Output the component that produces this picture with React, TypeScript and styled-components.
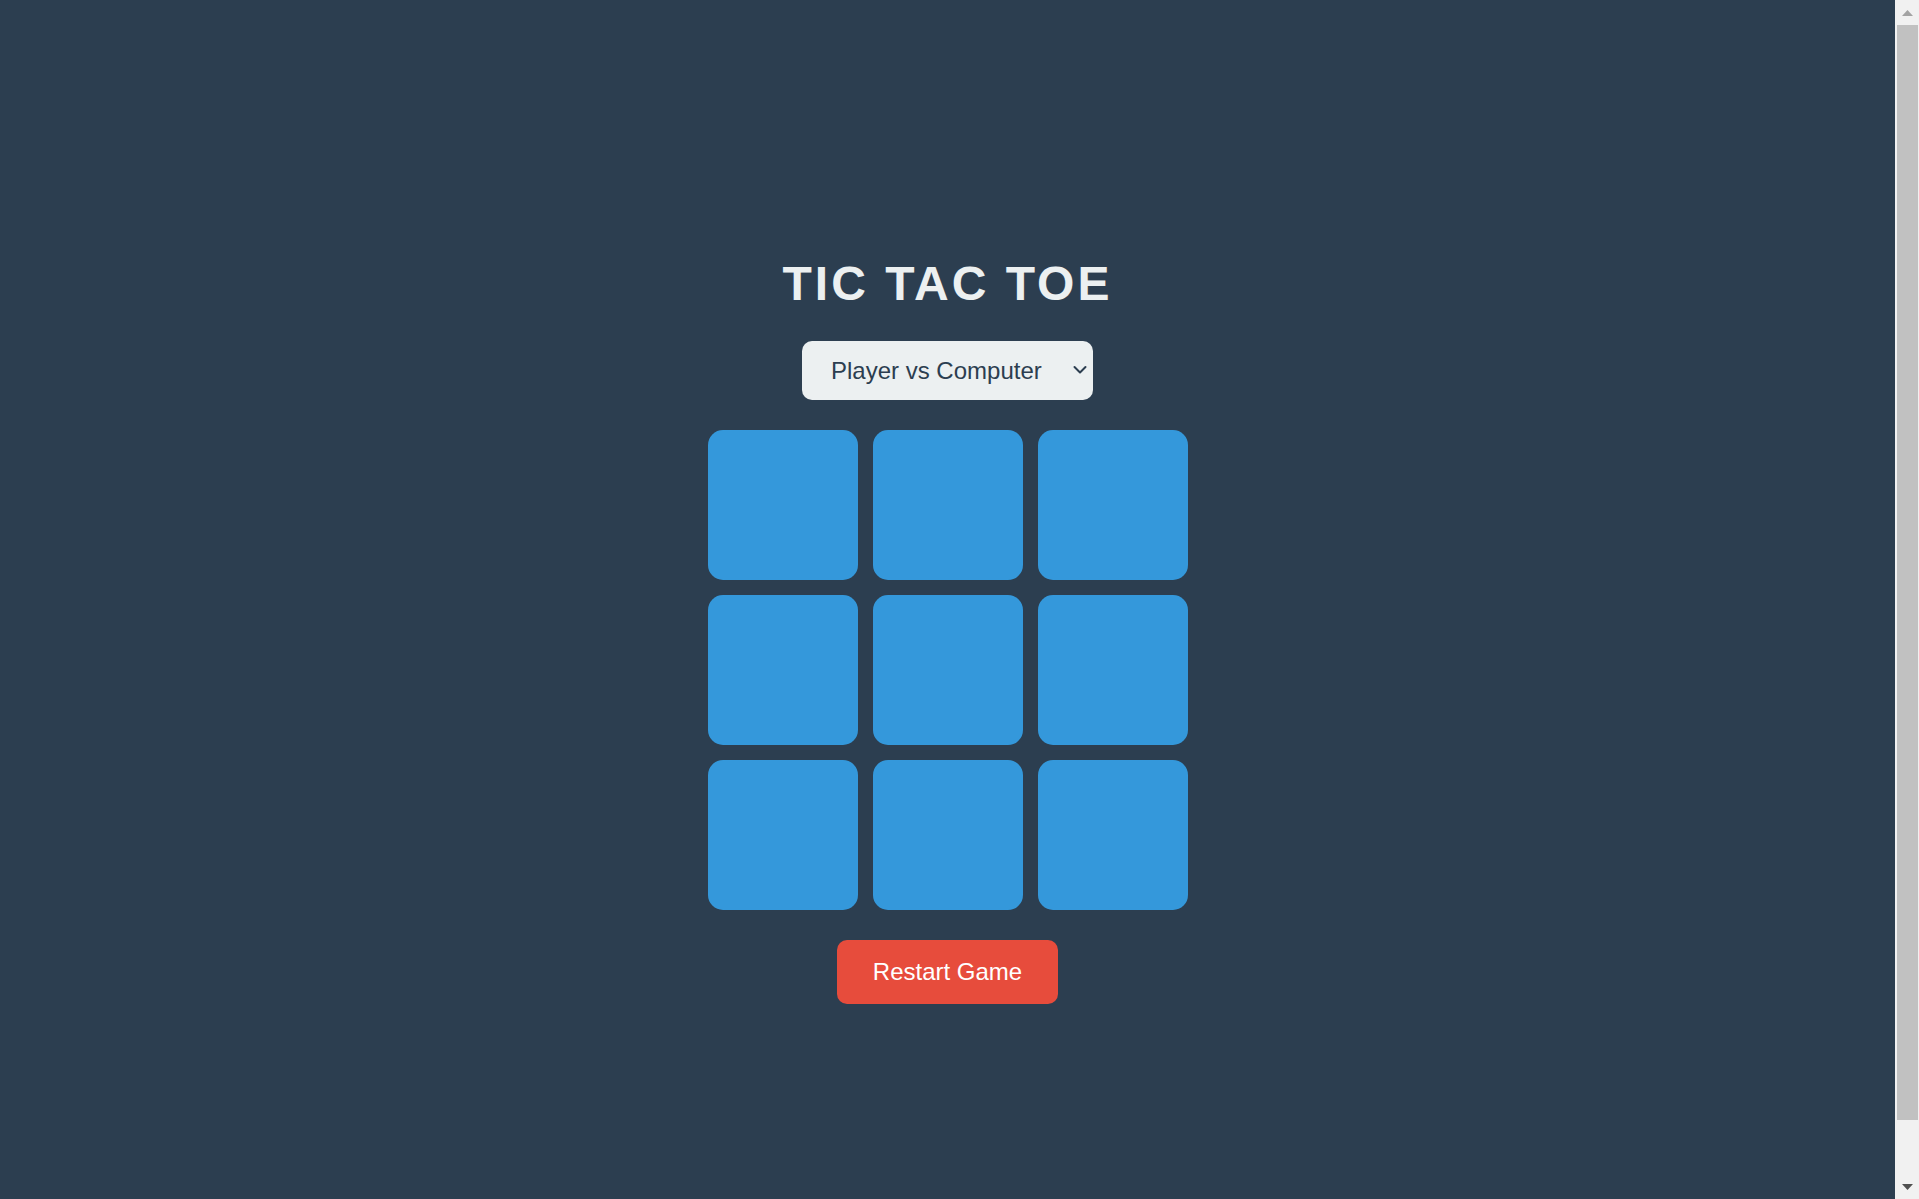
import React, { useState } from "react";
import styled, { createGlobalStyle } from "styled-components";

const GlobalStyle = createGlobalStyle`
  html, body {
    margin: 0;
    padding: 0;
    height: 100%;
    overflow: hidden;
    background: #2c3e50;
  }
  body {
    font-family: "Liberation Sans", Arial, sans-serif;
  }
`;

const Window = styled.div`
  display: flex;
  align-items: flex-start;
  background: #2c3e50;
`;

const Page = styled.main`
  flex: 1;
  min-height: 100vh;
  padding: 30px 0;
  display: flex;
  flex-direction: column;
  align-items: center;
  justify-content: center;
  gap: 30px;
  color: #ecf0f1;
`;

const Scrollbar = styled.div`
  width: 24px;
  height: 100vh;
  flex-shrink: 0;
  background: #f1f1f1;
  display: flex;
  flex-direction: column;
`;

const ScrollButton = styled.div`
  height: 25px;
  flex-shrink: 0;
  display: flex;
  align-items: center;
  justify-content: center;
  padding-left: 1px;
`;

const Track = styled.div`
  flex: 1;
  padding: 0 1px 0 2px;
`;

const Thumb = styled.div`
  height: 1095px;
  background: #c1c1c1;
`;

const Title = styled.h1`
  margin: 0;
  font-size: 48px;
  font-weight: 700;
  letter-spacing: 3px;
  color: #ecf0f1;
  line-height: normal;
`;

const SelectWrap = styled.div`
  position: relative;
  display: inline-block;
`;

const ModeSelect = styled.select`
  appearance: none;
  -webkit-appearance: none;
  display: block;
  font-family: "Liberation Sans", Arial, sans-serif;
  font-size: 24px;
  line-height: normal;
  padding: 16px 51px 16px 29px;
  border: none;
  border-radius: 10px;
  background: #ecf0f1;
  color: #2c3e50;
  outline: none;
  cursor: pointer;
`;

const Chevron = styled.svg`
  position: absolute;
  right: 6px;
  top: 50%;
  width: 14px;
  height: 9px;
  transform: translateY(-50%);
  pointer-events: none;
`;

const Board = styled.div`
  display: grid;
  grid-template-columns: repeat(3, 150px);
  grid-auto-rows: 150px;
  gap: 15px;
`;

const Cell = styled.button`
  border: none;
  border-radius: 15px;
  background: #3498db;
  color: #ecf0f1;
  font-size: 64px;
  font-weight: 700;
  font-family: "Liberation Sans", Arial, sans-serif;
  cursor: pointer;
  padding: 0;
`;

const RestartButton = styled.button`
  font-family: "Liberation Sans", Arial, sans-serif;
  font-size: 24px;
  padding: 18px 36px;
  border: none;
  border-radius: 10px;
  background: #e74c3c;
  color: #ffffff;
  cursor: pointer;
  line-height: normal;
`;

export default function App() {
  const [cells, setCells] = useState<string[]>(Array(9).fill(""));
  const [mode, setMode] = useState("pvc");

  return (
    <>
      <GlobalStyle />
      <Window>
        <Page>
          <Title>TIC TAC TOE</Title>
          <SelectWrap>
            <ModeSelect value={mode} onChange={(e) => setMode(e.target.value)}>
              <option value="pvc">Player vs Computer</option>
              <option value="pvp">Player vs Player</option>
            </ModeSelect>
            <Chevron viewBox="0 0 14 9">
              <path
                d="M1.5 1.5 L7 7 L12.5 1.5"
                fill="none"
                stroke="#2c3e50"
                strokeWidth="2"
                strokeLinecap="round"
                strokeLinejoin="round"
              />
            </Chevron>
          </SelectWrap>
          <Board>
            {cells.map((c, i) => (
              <Cell key={i}>{c}</Cell>
            ))}
          </Board>
          <RestartButton onClick={() => setCells(Array(9).fill(""))}>
            Restart Game
          </RestartButton>
        </Page>
        <Scrollbar aria-hidden="true">
          <ScrollButton>
            <svg width="11" height="6" viewBox="0 0 11 6">
              <polygon points="0,6 5.5,0 11,6" fill="#a3a3a3" />
            </svg>
          </ScrollButton>
          <Track>
            <Thumb />
          </Track>
          <ScrollButton>
            <svg width="11" height="6" viewBox="0 0 11 6">
              <polygon points="0,0 5.5,6 11,0" fill="#505050" />
            </svg>
          </ScrollButton>
        </Scrollbar>
      </Window>
    </>
  );
}
